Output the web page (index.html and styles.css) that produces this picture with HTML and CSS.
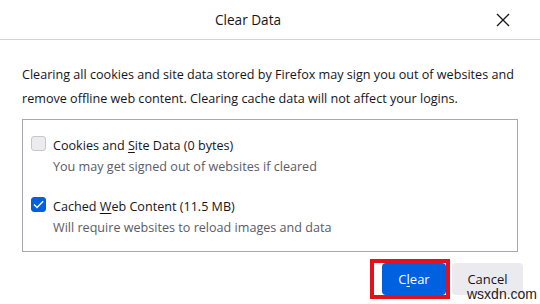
FILE: index.html
```html
<!DOCTYPE html>
<html>
<head>
<meta charset="utf-8">
<link rel="stylesheet" href="styles.css">
</head>
<body>
<div class="dialog">
  <header class="head">
    <h1 class="title">Clear Data</h1>
    <button class="close" aria-label="Close">
      <svg width="14" height="14" viewBox="0 0 14 14"><path d="M1 1L13 13M13 1L1 13" stroke="#15141a" stroke-width="1.3" fill="none"/></svg>
    </button>
  </header>
  <div class="content">
    <p class="intro">Clearing all cookies and site data stored by Firefox may sign you out of websites and remove offline web content. Clearing cache data will not affect your logins.</p>
    <div class="box">
      <div class="option">
        <span class="check"></span>
        <div class="texts">
          <div class="label">Cookies and <u>S</u>ite Data (0 bytes)</div>
          <div class="desc">You may get signed out of websites if cleared</div>
        </div>
      </div>
      <div class="option">
        <span class="check on">
          <svg width="15" height="15" viewBox="0 0 15 15"><path d="M3 7.6L6 10.6L12.2 4.2" stroke="#fff" stroke-width="1.4" fill="none"/></svg>
        </span>
        <div class="texts">
          <div class="label">Cached <u>W</u>eb Content (11.5 MB)</div>
          <div class="desc">Will require websites to reload images and data</div>
        </div>
      </div>
    </div>
  </div>
  <footer class="foot">
    <button class="btn primary">C<u>l</u>ear<span class="mark"></span></button>
    <button class="btn">Cancel</button>
  </footer>
  <span class="wm">wsxdn.com</span>
</div>
</body>
</html>
```
FILE: styles.css
```css
html, body { margin: 0; padding: 0; background: #fff; }
body { font-family: "Open Sans", "Noto Sans", sans-serif; color: #15141a; }
.dialog { position: relative; width: 540px; height: 304px; overflow: hidden; }
.head {
  height: 40px; border-bottom: 1px solid #d4d4d8; box-sizing: border-box;
  display: flex; align-items: center;
}
.title { margin: 0; flex: 1; text-align: center; font-size: 13.6px; font-weight: 400; }
.close { margin-right: 30px; border: 0; background: none; padding: 0; display: flex; }
.content { padding: 23px 22px 0 22px; }
.intro { margin: 0; font-size: 12.6px; line-height: 24px; }
.box {
  margin-top: 8px; border: 1px solid #a7a7ad; height: 133px; box-sizing: border-box;
  padding: 16px 0 0 8px; display: flex; flex-direction: column; gap: 20px;
}
.option { display: flex; gap: 7px; }
.check {
  width: 15px; height: 15px; box-sizing: border-box; border-radius: 3px;
  border: 1px solid #c6c6cc; background: #ececee; flex: none; display: flex;
}
.check.on { background: #0061e0; border-color: #0061e0; }
.check.on svg { margin: -1px; }
.texts { font-size: 12.6px; }
.label { line-height: 18px; margin-top: 1px; }
.desc { color: #5b5b66; line-height: 20px; margin-top: 2px; }
u { text-decoration-thickness: 1px; text-underline-offset: 2px; }
.foot { display: flex; justify-content: flex-end; gap: 6px; padding: 11px 17px 0 0; }
.btn {
  font-family: inherit; font-size: 13px; color: #15141a; border: 0; border-radius: 4px;
  background: #ebebef; height: 32px; width: 71px; padding: 0; position: relative;
}
.btn.primary { background: #0061e0; color: #fff; width: 64px; }
.mark {
  position: absolute; left: -12px; top: -4px; width: 80px; height: 40px;
  box-sizing: border-box; border: 4px solid #e3101e; pointer-events: none;
}
.wm { position: absolute; left: 467px; top: 286px; font-size: 14px; color: #222; font-family: "Liberation Sans", sans-serif; }
```
